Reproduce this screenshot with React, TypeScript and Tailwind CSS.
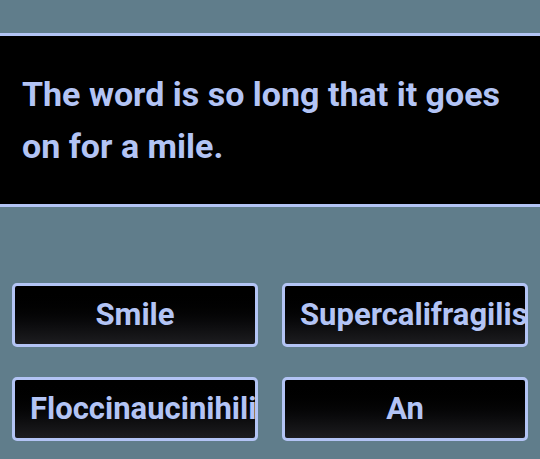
import React from "react";

const words = ["Smile", "Supercalifragilis", "Floccinaucinihili", "An"];

const App = () => {
  return (
    <div
      className="min-h-[459px] w-[540px] bg-[#607d8b] pt-[33px]"
      style={{ fontFamily: "Roboto, 'Liberation Sans', sans-serif" }}
    >
      <div className="border-y-[3px] border-[#b3c4f5] bg-black px-[22px] py-8">
        <h1 className="text-[34px] font-bold leading-[52px] text-[#b3c4f5]">
          The word is so long that it goes on for a mile.
        </h1>
      </div>
      <div className="mt-[76px] grid grid-cols-2 gap-x-6 gap-y-[30px] px-3">
        {words.map((word) => (
          <div
            key={word}
            className="h-16 overflow-hidden whitespace-nowrap rounded-[5px] border-[3px] border-[#b3c4f5] bg-gradient-to-b from-black to-[#1d1d20] px-[15px] text-center text-[31px] font-bold leading-[58px] text-[#b3c4f5]"
          >
            {word}
          </div>
        ))}
      </div>
    </div>
  );
};

export default App;
